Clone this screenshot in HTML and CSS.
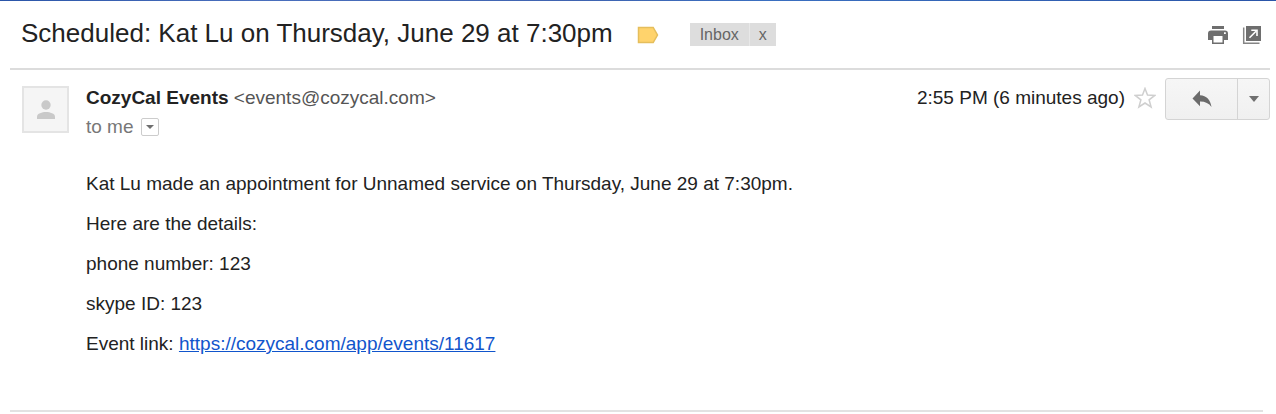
FILE: index.html
```html
<!DOCTYPE html>
<html lang="en">
<head>
<meta charset="utf-8">
<meta name="viewport" content="width=device-width, initial-scale=1">
<title>Scheduled: Kat Lu on Thursday, June 29 at 7:30pm</title>
<link rel="stylesheet" href="styles.css">
</head>
<body>
<div class="theme-strip"></div>
<main class="thread">
  <header class="subject-bar">
    <h1 class="subject">Scheduled: Kat Lu on Thursday, June 29 at 7:30pm</h1>
    <button class="icon-button importance" type="button" aria-label="Important">
      <svg width="22" height="18" viewBox="0 0 22 18"><path d="M1.5 1.500h14.700l4.300 7.500-4.300 7.500H1.500z" fill="#ffd36c" stroke="#e5be5c" stroke-width="1.500"/></svg>
    </button>
    <div class="label">
      <button class="label-name" type="button">Inbox</button>
      <button class="label-remove" type="button" aria-label="Remove label Inbox">x</button>
    </div>
    <div class="tools">
      <button class="icon-button" type="button" aria-label="Print">
        <svg width="22" height="20" viewBox="0 0 22 20"><path d="M5 1h12v3H5z" fill="#6e6e6e"/><path fill-rule="evenodd" d="M4 5.500h14a3 3 0 0 1 3 3V15h-4v4H5v-4H1V8.500a3 3 0 0 1 3-3zM6.500 11v6.500h9V11zM17 7.200v1.700h1.800V7.200z" fill="#6e6e6e"/></svg>
      </button>
      <button class="icon-button" type="button" aria-label="Open in new window">
        <svg width="20" height="20" viewBox="0 0 20 20"><path d="M4 1h15v15H4z" fill="#6e6e6e"/><path d="M1.700 2.500v15.800h15.800" fill="none" stroke="#858585" stroke-width="1.500"/><path d="M7.500 12.800 14 6.300M9.300 5.200h5.700v5.700" fill="none" stroke="#fff" stroke-width="1.600"/></svg>
      </button>
    </div>
  </header>
  <article class="message">
    <div class="avatar">
      <svg width="18" height="20" viewBox="0 0 18 20"><circle cx="9" cy="5" r="4.700" fill="#c9c9c9"/><path d="M0 19v-2.500C0 13.500 5 12 9 12s9 1.500 9 4.500V19z" fill="#c9c9c9"/></svg>
    </div>
    <div class="content">
      <div class="message-head">
        <div class="people">
          <div class="from"><strong class="sender">CozyCal Events</strong> <span class="address">&lt;events@cozycal.com&gt;</span></div>
          <div class="recipients">to me
            <button class="details" type="button" aria-label="Show details">
              <svg width="8" height="4" viewBox="0 0 8 4"><path d="M0 0h8L4 4z" fill="#6f6f6f"/></svg>
            </button>
          </div>
        </div>
        <time class="date">2:55 PM (6 minutes ago)</time>
        <button class="icon-button star" type="button" aria-label="Star">
          <svg width="22" height="22" viewBox="0 0 22 22"><path d="M11 1.500l2.500 6.600 7.300.3-5.700 4.400 2 7.200L11 16l-6.100 4 2-7.200L1.200 8.400l7.300-.3z" fill="#fff" stroke="#cfcfcf" stroke-width="1.500"/></svg>
        </button>
        <div class="actions">
          <button class="action reply" type="button" aria-label="Reply">
            <svg width="20" height="18" viewBox="0 0 20 18"><path d="M8 .5v4.800c6.500.3 10.500 4.700 11.500 11.700C17 13.300 13 11.400 8 11.500v4.700L.5 8.400z" fill="#6b6b6b"/></svg>
          </button>
          <button class="action more" type="button" aria-label="More">
            <svg width="10" height="6" viewBox="0 0 10 6"><path d="M0 0h10L5 6z" fill="#6f6f6f"/></svg>
          </button>
        </div>
      </div>
      <div class="body">
        <p>Kat Lu made an appointment for Unnamed service on Thursday, June 29 at 7:30pm.</p>
        <p>Here are the details:</p>
        <p>phone number: 123</p>
        <p>skype ID: 123</p>
        <p>Event link: <a href="https://cozycal.com/app/events/11617">https://cozycal.com/app/events/11617</a></p>
      </div>
    </div>
  </article>
  <hr class="thread-end">
</main>
</body>
</html>
```
FILE: styles.css
```css
* {
  box-sizing: border-box;
}

body {
  margin: 0;
  background: #fff;
  color: #222;
  font-family: "Liberation Sans", Arial, sans-serif;
  font-size: 19px;
  line-height: 21px;
}

button {
  margin: 0;
  padding: 0;
  border: 0;
  background: none;
  color: inherit;
  font: inherit;
  cursor: pointer;
}

svg {
  display: block;
}

.theme-strip {
  height: 1px;
  background: linear-gradient(90deg, #2a55a8, #4a6fbd 20%, #3f63b0 45%, #3a6fc0 60%, #2a55a8);
}

.thread {
  padding: 0 6px 0 10px;
}

.subject-bar {
  display: flex;
  align-items: center;
  height: 69px;
  padding: 0 8px 0 11px;
  border-bottom: 2px solid #dcdcdc;
}

.subject {
  margin: 0;
  padding-bottom: 3px;
  font-size: 26px;
  font-weight: 400;
  line-height: 32px;
}

.importance {
  margin: 0 31px 0 24px;
}

.label {
  display: flex;
  color: #666;
  font-size: 16px;
  line-height: 23px;
}

.label-name,
.label-remove {
  padding: 0 10px;
  background: #ddd;
}

.label-remove {
  padding: 0 9px;
  border-left: 1px solid #e8e8e8;
}

.tools {
  display: flex;
  gap: 13px;
  margin-left: auto;
}

.message {
  display: flex;
  gap: 17px;
  padding: 8px 0 56px 12px;
}

.avatar {
  display: flex;
  flex: none;
  align-items: center;
  justify-content: center;
  width: 47px;
  height: 47px;
  margin-top: 8px;
  border: 2px solid #e4e4e4;
  background: #f5f5f5;
}

.content {
  flex: 1;
}

.message-head {
  display: flex;
  align-items: flex-start;
}

.people {
  flex: 1;
  padding-top: 9px;
}

.address {
  color: #555;
}

.recipients {
  display: flex;
  align-items: center;
  gap: 7px;
  margin-top: 8px;
  color: #777;
}

.details {
  display: flex;
  align-items: center;
  justify-content: center;
  width: 18px;
  height: 18px;
  border: 1px solid #ccc;
  border-radius: 2px;
}

.date {
  padding-top: 9px;
}

.star {
  margin: 9px 9px 0;
}

.actions {
  display: flex;
  height: 42px;
  border: 1px solid #d4d4d4;
  border-radius: 3px;
  background: linear-gradient(#f6f6f6, #f0f0f0);
}

.action {
  display: flex;
  align-items: center;
  justify-content: center;
}

.reply {
  width: 71px;
}

.more {
  width: 32px;
  border-left: 1px solid #d4d4d4;
}

.body {
  display: grid;
  gap: 19px;
  margin-top: 36px;
}

.body p {
  margin: 0;
}

.body a {
  color: #15c;
}

.thread-end {
  margin: 0 7px 0 0;
  border: 0;
  border-top: 2px solid #e2e2e2;
}
```
